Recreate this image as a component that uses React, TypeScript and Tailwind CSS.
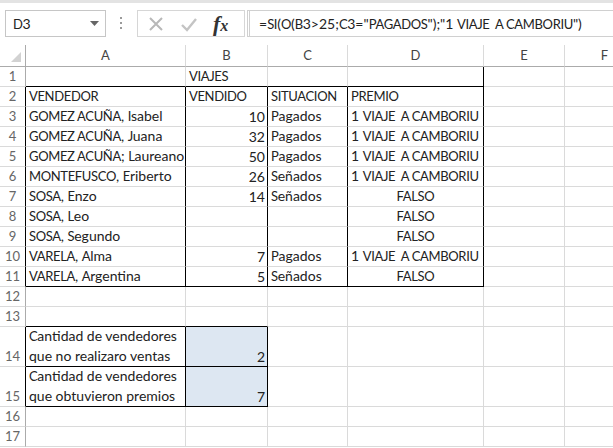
const COLS = ["A", "B", "C", "D", "E", "F"];
const W = ["w-[160px]", "w-[82px]", "w-[80px]", "w-[136px]", "w-[81px]", "w-[80px]"];

type Cell = {
    text?: string;
    align?: "l" | "r" | "c";
    r?: boolean; // black right border
    b?: boolean; // black bottom border
    fill?: boolean;
    wrap?: string[];
};

interface Row {
    n: number;
    tall?: boolean;
    edge?: boolean; // black left edge of table
    cells: Cell[];
}

const PRIZE = "1 VIAJE  A CAMBORIU";

// Calibri capitals are narrow, so capital runs get a tighter size
function Txt({ s }: { s: string }) {
    const parts = s.split(/([A-ZÑ][A-ZÑ ]*[A-ZÑ]|[A-ZÑ])/);
    return (
        <>
            {parts.map((p, i) =>
                i % 2 === 1 ? (
                    <span key={i} className="text-[13px] tracking-[-0.35px]">{p}</span>
                ) : (
                    p
                ),
            )}
        </>
    );
}

const person = (name: string, sold: string, state: string, prize: string, last = false): Cell[] => [
    { text: name, r: true, b: last },
    { text: sold, align: "r", r: true, b: last },
    { text: state, r: true, b: last },
    { text: prize, align: prize === "FALSO" ? "c" : "l", r: true, b: last },
];

const ROWS: Row[] = [
    { n: 1, cells: [{ b: true }, { text: "VIAJES", b: true }, { b: true }, { r: true, b: true }] },
    { n: 2, edge: true, cells: [{ text: "VENDEDOR", r: true }, { text: "VENDIDO", r: true }, { text: "SITUACION", r: true }, { text: "PREMIO", r: true }] },
    { n: 3, edge: true, cells: person("GOMEZ ACUÑA, Isabel", "10", "Pagados", PRIZE) },
    { n: 4, edge: true, cells: person("GOMEZ ACUÑA, Juana", "32", "Pagados", PRIZE) },
    { n: 5, edge: true, cells: person("GOMEZ ACUÑA; Laureano", "50", "Pagados", PRIZE) },
    { n: 6, edge: true, cells: person("MONTEFUSCO, Eriberto", "26", "Señados", PRIZE) },
    { n: 7, edge: true, cells: person("SOSA, Enzo", "14", "Señados", "FALSO") },
    { n: 8, edge: true, cells: person("SOSA, Leo", "", "", "FALSO") },
    { n: 9, edge: true, cells: person("SOSA, Segundo", "", "", "FALSO") },
    { n: 10, edge: true, cells: person("VARELA, Alma", "7", "Pagados", PRIZE) },
    { n: 11, edge: true, cells: person("VARELA, Argentina", "5", "Señados", "FALSO", true) },
    { n: 12, cells: [] },
    { n: 13, cells: [{ b: true }, { b: true }] },
    {
        n: 14,
        tall: true,
        edge: true,
        cells: [
            { wrap: ["Cantidad de vendedores", "que no realizaro ventas"], r: true, b: true },
            { text: "2", align: "r", r: true, b: true, fill: true },
        ],
    },
    {
        n: 15,
        tall: true,
        edge: true,
        cells: [
            { wrap: ["Cantidad de vendedores", "que obtuvieron premios"], r: true, b: true },
            { text: "7", align: "r", r: true, b: true, fill: true },
        ],
    },
    { n: 16, cells: [] },
    { n: 17, cells: [] },
];

function Toolbar() {
    return (
        <div className="relative h-[45px] bg-white border-t-[3px] border-[#e3e3e3]">
            <div className="absolute left-[5px] top-[7px] flex h-[27px] w-[101px] items-center justify-between border border-[#c6c6c6] pl-[7px] pr-[6px]">
                <span className="text-[14px] text-[#222]"><Txt s="D3" /></span>
                <svg width="9" height="5" viewBox="0 0 9 5">
                    <path d="M0 0h9L4.5 5z" fill="#666" />
                </svg>
            </div>
            <div className="absolute left-[120px] top-[14px] flex flex-col gap-[3px]">
                <span className="h-[2px] w-[2px] bg-[#9a9a9a]" />
                <span className="h-[2px] w-[2px] bg-[#9a9a9a]" />
                <span className="h-[2px] w-[2px] bg-[#9a9a9a]" />
            </div>
            <div className="absolute left-[137px] top-[7px] flex h-[27px] w-[108px] items-center border border-[#d6d6d6]">
                <svg className="ml-[10px]" width="16" height="16" viewBox="0 0 16 16">
                    <path d="M2 2l12 12M14 2L2 14" stroke="#b8b8b8" strokeWidth="2" />
                </svg>
                <svg className="ml-[16px]" width="18" height="16" viewBox="0 0 18 16">
                    <path d="M2 9l5 5L16 3" stroke="#c4c4c4" strokeWidth="2.4" fill="none" />
                </svg>
                <span className="ml-[15px] font-['Liberation_Serif',serif] text-[22px] font-bold italic leading-none text-[#333]">
                    f<span className="text-[16px]">x</span>
                </span>
            </div>
            <div className="absolute left-[247px] top-[7px] flex h-[27px] w-[380px] items-center border-y border-l-[3px] border-double border-[#d0d0d0] pl-[9px]">
                <span className="whitespace-pre text-[14px] text-[#222]">
                    <Txt s={'=SI(O(B3>25;C3="PAGADOS");"1 VIAJE  A CAMBORIU")'} />
                </span>
            </div>
        </div>
    );
}

function HeaderRow() {
    return (
        <div className="flex h-[22px]">
            <div className="relative w-[26px] shrink-0 border-r border-b border-[#ababab]">
                <svg className="absolute right-[4px] bottom-[4px]" width="10" height="10" viewBox="0 0 10 10">
                    <path d="M10 0v10H0z" fill="#d2d2d2" />
                </svg>
            </div>
            {COLS.map((c, i) => (
                <div
                    key={c}
                    className={`${W[i]} shrink-0 flex items-center justify-center border-r border-b border-r-[#dadada] border-b-[#ababab] text-[13px] text-[#444]`}
                >
                    {c}
                </div>
            ))}
        </div>
    );
}

function SheetRow({ row }: { row: Row }) {
    return (
        <div className={`flex ${row.tall ? "h-[40px]" : "h-[20px]"}`}>
            <div
                className={`w-[26px] shrink-0 flex items-end justify-center border-r border-b border-b-[#dadada] text-[13px] leading-[19px] text-[#666] ${row.edge ? "border-r-black" : "border-r-[#ababab]"}`}
            >
                {row.n}
            </div>
            {COLS.map((c, i) => {
                const cell = row.cells[i] ?? {};
                const align = cell.align === "r" ? "justify-end pr-[2px]" : cell.align === "c" ? "justify-center" : "justify-start pl-[3px]";
                return (
                    <div
                        key={c}
                        className={`${W[i]} shrink-0 flex items-end overflow-hidden whitespace-pre border-r border-b leading-[19px] ${align} ${cell.r ? "border-r-black" : "border-r-[#dadada]"} ${cell.b ? "border-b-black" : "border-b-[#dadada]"} ${cell.fill ? "bg-[#dde7f2]" : "bg-white"}`}
                    >
                        {cell.wrap ? (
                            <div className="flex flex-col">
                                {cell.wrap.map((line) => (
                                    <span key={line} className="leading-[20px]"><Txt s={line} /></span>
                                ))}
                            </div>
                        ) : (
                            <span><Txt s={cell.text ?? ""} /></span>
                        )}
                    </div>
                );
            })}
        </div>
    );
}

export default function App() {
    return (
        <div className="h-[448px] w-[613px] overflow-hidden bg-white font-['Lato',sans-serif] text-[14px] text-[#222]">
            <Toolbar />
            <HeaderRow />
            {ROWS.map((row) => (
                <SheetRow key={row.n} row={row} />
            ))}
        </div>
    );
}
